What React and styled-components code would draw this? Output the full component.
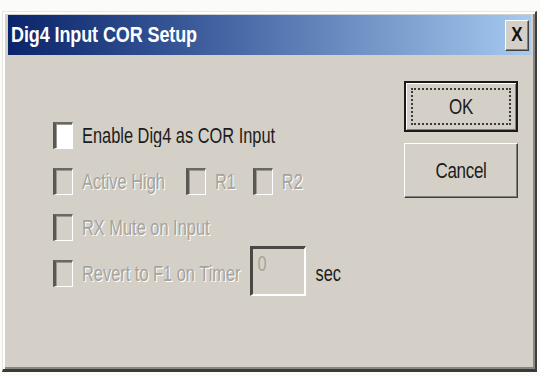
import React from "react";
import styled, { createGlobalStyle } from "styled-components";

const GlobalStyle = createGlobalStyle`
  html, body {
    margin: 0;
    padding: 0;
    background: #fbfbf9;
  }
  body {
    font-family: "Liberation Sans", Arial, sans-serif;
  }
`;

const Window = styled.div`
  box-sizing: border-box;
  margin: 11px 3px 0 2px;
  width: 535px;
  height: 361px;
  background: #d4d0c8;
  border-top: 1px solid #e8e6e0;
  border-left: 1px solid #e8e6e0;
  border-right: 2px solid #404040;
  border-bottom: 3px solid #3a3a3a;
  box-shadow: inset 2px 2px 0 #ffffff, inset -2px -2px 0 #8a8782;
  padding: 3px 4px 4px 5px;
  display: flex;
  flex-direction: column;
`;

const TitleBar = styled.div`
  height: 40px;
  display: flex;
  align-items: center;
  justify-content: space-between;
  padding: 0 2px 0 3px;
  background: linear-gradient(to right, #0a246a 0%, #3a5a9a 35%, #a6caf0 100%);
`;

const Title = styled.span`
  display: inline-block;
  color: #ffffff;
  font-weight: bold;
  font-size: 18px;
  letter-spacing: -0.1px;
  transform: scaleY(1.2);
`;

const CloseButton = styled.div`
  box-sizing: border-box;
  width: 24px;
  height: 31px;
  background: #d4d0c8;
  border-top: 1px solid #ffffff;
  border-left: 1px solid #ffffff;
  border-right: 1px solid #404040;
  border-bottom: 1px solid #404040;
  box-shadow: inset -1px -1px 0 #808080;
  display: flex;
  align-items: center;
  justify-content: center;
  color: #111;
  font-weight: bold;
  font-size: 17px;
  span {
    display: inline-block;
    transform: scaleY(1.2);
  }
`;

const Content = styled.div`
  flex: 1;
  display: flex;
  justify-content: space-between;
  padding: 0 13px 0 45px;
`;

const Options = styled.div`
  display: flex;
  flex-direction: column;
  padding-top: 57px;
`;

const Row = styled.div`
  height: 46px;
  display: flex;
  align-items: center;
`;

const Check = styled.span`
  box-sizing: border-box;
  width: 20px;
  height: 27px;
  margin-right: 9px;
  background: ${(p) => (p.$disabled ? "#d4d0c8" : "#ffffff")};
  border-top: 2px solid #6a6864;
  border-left: 3px solid #5a5854;
  border-right: 1px solid #ffffff;
  border-bottom: 1px solid #ffffff;
  box-shadow: inset 1px 1px 0 #9a9790;
`;

const Label = styled.span`
  display: inline-block;
  font-size: 16.4px;
  letter-spacing: 0;
  transform: scaleY(1.32);
  color: ${(p) => (p.$disabled ? "#a6a39c" : "#1c1c1c")};
  text-shadow: ${(p) => (p.$disabled ? "1px 1px 0 #ffffff" : "none")};
  margin-right: ${(p) => p.$after || 0}px;
`;

const TimerBox = styled.div`
  box-sizing: border-box;
  width: 56px;
  height: 50px;
  margin: -4px 10px 0 9px;
  background: #d4d0c8;
  border-top: 3px solid #4a4844;
  border-left: 3px solid #4a4844;
  border-right: 2px solid #ffffff;
  border-bottom: 2px solid #ffffff;
  padding: 2px 0 0 5px;
  color: #a6a39c;
  span {
    display: inline-block;
    font-size: 16.4px;
    transform: scaleY(1.32);
    transform-origin: top left;
  }
`;

const Buttons = styled.div`
  display: flex;
  flex-direction: column;
  gap: 11px;
  padding-top: 26px;
`;

const Button = styled.div`
  box-sizing: border-box;
  width: 114px;
  height: ${(p) => (p.$default ? 51 : 55)}px;
  background: #d4d0c8;
  border: ${(p) => (p.$default ? "2px solid #1a1a1a" : "1px solid #404040")};
  border-top-color: ${(p) => (p.$default ? "#1a1a1a" : "#ffffff")};
  border-left-color: ${(p) => (p.$default ? "#1a1a1a" : "#ffffff")};
  box-shadow: ${(p) =>
    p.$default
      ? "inset 1px 1px 0 #ffffff, inset -1px -1px 0 #808080"
      : "inset -1px -1px 0 #808080"};
  display: flex;
  align-items: center;
  justify-content: center;
  padding: ${(p) => (p.$default ? "5px" : "0")};
  color: #1c1c1c;
`;

const Focus = styled.div`
  box-sizing: border-box;
  width: 100%;
  height: 100%;
  border: 2px dotted #3a3a3a;
  display: flex;
  align-items: center;
  justify-content: center;
`;

const ButtonText = styled.span`
  display: inline-block;
  font-size: 17px;
  letter-spacing: -0.3px;
  transform: scaleY(1.3);
`;

export default function App() {
  return (
    <>
      <GlobalStyle />
      <Window>
        <TitleBar>
          <Title>Dig4 Input COR Setup</Title>
          <CloseButton>
            <span>X</span>
          </CloseButton>
        </TitleBar>
        <Content>
          <Options>
            <Row>
              <Check />
              <Label>Enable Dig4 as COR Input</Label>
            </Row>
            <Row>
              <Check $disabled />
              <Label $disabled $after={21}>Active High</Label>
              <Check $disabled />
              <Label $disabled $after={17}>R1</Label>
              <Check $disabled />
              <Label $disabled>R2</Label>
            </Row>
            <Row>
              <Check $disabled />
              <Label $disabled>RX Mute on Input</Label>
            </Row>
            <Row>
              <Check $disabled />
              <Label $disabled>Revert to F1 on Timer</Label>
              <TimerBox>
                <span>0</span>
              </TimerBox>
              <Label>sec</Label>
            </Row>
          </Options>
          <Buttons>
            <Button $default>
              <Focus>
                <ButtonText>OK</ButtonText>
              </Focus>
            </Button>
            <Button>
              <ButtonText>Cancel</ButtonText>
            </Button>
          </Buttons>
        </Content>
      </Window>
    </>
  );
}
